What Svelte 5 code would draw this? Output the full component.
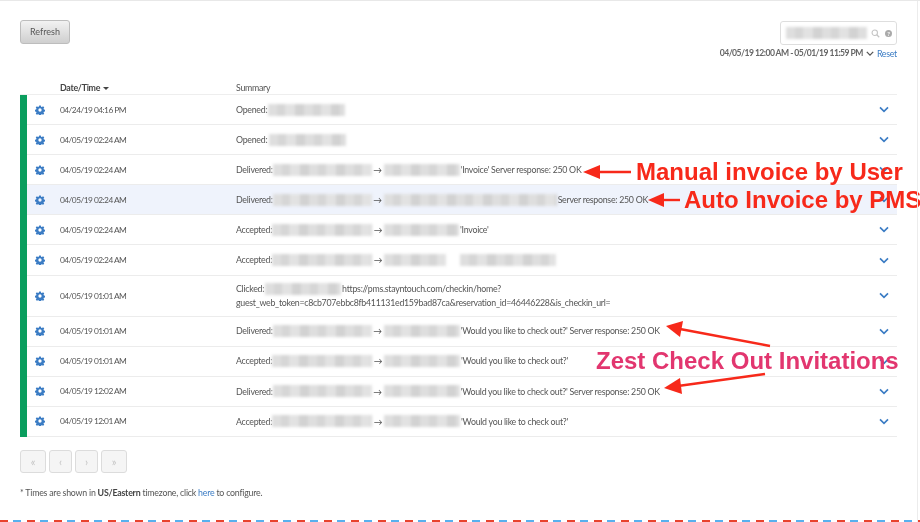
<script>
    const rows = [
        { date: '04/24/19 04:16 PM', label: 'Opened:', parts: [{ w: 77, gap: 1 }] },
        { date: '04/05/19 02:24 AM', label: 'Opened:', parts: [{ w: 77, gap: 2 }] },
        { date: '04/05/19 02:24 AM', label: 'Delivered:', parts: [{ w: 99, gap: 0 }, { w: 76, arrow: true }], text: "'Invoice' Server response: 250 OK" },
        { date: '04/05/19 02:24 AM', label: 'Delivered:', parts: [{ w: 99, gap: 0 }, { w: 173, arrow: true }], text: 'Server response: 250 OK', active: true },
        { date: '04/05/19 02:24 AM', label: 'Accepted:', parts: [{ w: 100, gap: 0 }, { w: 75, arrow: true }], text: "'Invoice'" },
        { date: '04/05/19 02:24 AM', label: 'Accepted:', parts: [{ w: 100, gap: 0 }, { w: 62, arrow: true }, { w: 96, gap: 14 }] },
        {
            date: '04/05/19 01:01 AM',
            label: 'Clicked:',
            parts: [{ w: 76, gap: 1 }],
            text: 'https://pms.stayntouch.com/checkin/home?',
            extra: 'guest_web_token=c8cb707ebbc8fb411131ed159bad87ca&reservation_id=46446228&is_checkin_url=',
            tall: true
        },
        { date: '04/05/19 01:01 AM', label: 'Delivered:', parts: [{ w: 99, gap: 0 }, { w: 76, arrow: true }], text: "'Would you like to check out?' Server response: 250 OK" },
        { date: '04/05/19 01:01 AM', label: 'Accepted:', parts: [{ w: 100, gap: 0 }, { w: 76, arrow: true }], text: "'Would you like to check out?'" },
        { date: '04/05/19 12:02 AM', label: 'Delivered:', parts: [{ w: 99, gap: 0 }, { w: 76, arrow: true }], text: "'Would you like to check out?' Server response: 250 OK" },
        { date: '04/05/19 12:01 AM', label: 'Accepted:', parts: [{ w: 100, gap: 0 }, { w: 76, arrow: true }], text: "'Would you like to check out?'" }
    ];

    const pager = ['«', '‹', '›', '»'];
</script>

<main>
    <div class="toolbar">
        <button class="refresh">Refresh</button>
        <div class="filters">
            <div class="search">
                <span class="blur search-blur"></span>
                <svg class="search-icon" viewBox="0 0 12 12" width="9" height="9">
                    <circle cx="5" cy="5" r="3.6" fill="none" stroke="#c4c4c4" stroke-width="1.4" />
                    <path d="M7.7 7.7 11 11" stroke="#c4c4c4" stroke-width="1.6" />
                </svg>
                <span class="help">?</span>
            </div>
            <div class="range">
                <b>04/05/19 12:00 AM - 05/01/19 11:59 PM</b>
                <svg viewBox="0 0 10 6" width="8" height="5">
                    <path d="M1 1 5 5 9 1" fill="none" stroke="#555" stroke-width="1.6" />
                </svg>
                <a href="#reset">Reset</a>
            </div>
        </div>
    </div>

    <div class="head">
        <span class="head-date">Date/Time <i class="caret"></i></span>
        <span>Summary</span>
    </div>

    <div class="table">
        {#each rows as row}
            <div class="row" class:tall={row.tall} class:active={row.active}>
                <span class="status"></span>
                <svg class="gear" viewBox="0 0 24 24" width="10" height="10">
                    <path
                        fill="#3b7cc4"
                        fill-rule="evenodd"
                        d="M10 1h4l.6 3 2.2.9 2.6-1.7 2.8 2.8-1.7 2.6.9 2.2 3 .6v4l-3 .6-.9 2.2 1.7 2.6-2.8 2.8-2.6-1.7-2.2.9-.6 3h-4l-.6-3-2.2-.9-2.6 1.7-2.8-2.8 1.7-2.6-.9-2.2-3-.6v-4l3-.6.9-2.2L1.8 5.800l2.800-2.800 2.600 1.700 2.200-.9zM12 8a4 4 0 1 0 0 8 4 4 0 0 0 0-8z"
                    />
                </svg>
                <span class="date">{row.date}</span>
                <div class="summary">
                    <div class="line">
                        <span>{row.label}</span>
                        {#each row.parts as part}
                            {#if part.arrow}<span class="arrow">→</span>{/if}
                            <span class="blur" style="width: {part.w}px; margin-left: {part.gap ?? 0}px"></span>
                        {/each}
                        {#if row.text}<span class="after">{row.text}</span>{/if}
                    </div>
                    {#if row.extra}<div class="line">{row.extra}</div>{/if}
                </div>
                <svg class="chevron" viewBox="0 0 12 8" width="10" height="7">
                    <path d="M1.200 1.500 6 6.200 10.800 1.500" fill="none" stroke="#3b7cc4" stroke-width="2" />
                </svg>
            </div>
        {/each}
    </div>

    <div class="pager">
        {#each pager as item}
            <button disabled>{item}</button>
        {/each}
    </div>

    <p class="note">
        * Times are shown in <b>US/Eastern</b> timezone, click <a href="#here">here</a> to configure.
    </p>

    <div class="airmail"></div>

    <svg class="marks" viewBox="0 0 920 522" width="920" height="522">
        <g stroke="#f7291a" stroke-width="2.400" fill="#f7291a">
            <path d="M631 172H596" />
            <path stroke="none" d="M583 172 600 165V179z" />
            <path d="M680 200H660" />
            <path stroke="none" d="M648 200 664 193V207z" />
            <path d="M770 346 680 329" />
            <path stroke="none" d="M666 326 683 321 680 337z" />
            <path d="M765 374 678 386" />
            <path stroke="none" d="M664 388 680 378 682 394z" />
        </g>
    </svg>
    <span class="note-red manual">Manual invoice by User</span>
    <span class="note-red auto">Auto Invoice by PMS</span>
    <span class="note-red zest">Zest Check Out Invitations</span>
</main>

<style>
    :global(body) {
        margin: 0;
        background: #fff;
    }

    main {
        position: relative;
        width: 920px;
        height: 522px;
        box-sizing: border-box;
        padding: 20px 23px 0 20px;
        overflow: hidden;
        border-top: 1px solid #e8e8e8;
        font-family: Lato, "Liberation Sans", sans-serif;
        font-size: 8.800px;
        letter-spacing: -0.270px;
        color: #555;
        filter: blur(0.3px);
    }

    main::after {
        content: '';
        position: absolute;
        top: 0;
        right: 2px;
        bottom: 0;
        width: 1px;
        background: #ececec;
    }

    .toolbar {
        display: flex;
        justify-content: space-between;
        align-items: flex-start;
        height: 58px;
    }

    .refresh {
        width: 50px;
        height: 24px;
        margin-top: -1px;
        padding: 0 0 2px;
        font: inherit;
        font-size: 9px;
        letter-spacing: 0;
        color: #555;
        background: linear-gradient(#f2f2f2, #cfcfcf);
        border: 1px solid #bdbdbd;
        border-radius: 3px;
    }

    .filters {
        display: flex;
        flex-direction: column;
        align-items: flex-end;
    }

    .search {
        display: flex;
        align-items: center;
        box-sizing: border-box;
        width: 117px;
        height: 24px;
        padding: 0 3px 0 5px;
        border: 1px solid #dedede;
        border-radius: 3px;
    }

    .search-blur {
        width: 81px;
        margin-right: 4px;
    }

    .help {
        display: flex;
        align-items: center;
        justify-content: center;
        flex: none;
        width: 7px;
        height: 7px;
        margin-left: 5px;
        font-size: 6px;
        font-weight: 700;
        color: #fff;
        background: #aaa;
        border-radius: 50%;
    }

    .range {
        display: flex;
        align-items: center;
        gap: 3px;
        margin-top: 2px;
        line-height: 13px;
    }

    .range b {
        font-size: 8.600px;
        letter-spacing: -0.540px;
        color: #666;
    }

    .range a {
        margin-top: -1px;
    }

    a {
        color: #3b7cc4;
        text-decoration: none;
    }

    .head {
        display: flex;
        height: 15px;
        align-items: center;
        padding: 1px 0 0 40px;
        box-sizing: border-box;
    }

    .head-date {
        width: 176px;
        font-weight: 700;
        color: #444;
    }

    .caret {
        display: inline-block;
        margin-left: 1px;
        vertical-align: 1px;
        border: 3px solid transparent;
        border-top: 3px solid #444;
        border-bottom: 0;
    }

    .table {
        border-top: 1px solid #eee;
    }

    .row {
        display: flex;
        align-items: center;
        height: 30.100px;
        box-sizing: border-box;
        border-bottom: 1px solid #ececec;
    }

    .row.tall {
        height: 41px;
    }

    .row.active {
        background: #eff3fc;
    }

    .status {
        align-self: stretch;
        width: 7px;
        margin-bottom: -1px;
        background: #0a9e5e;
    }

    .gear {
        margin: 0 15px 0 8px;
    }

    .date {
        width: 176px;
        font-size: 8.400px;
        letter-spacing: -0.550px;
    }

    .summary {
        flex: 1;
        line-height: 13.500px;
    }

    .line {
        display: flex;
        align-items: center;
        white-space: nowrap;
    }

    .blur {
        display: inline-block;
        height: 12px;
        flex: none;
        background: repeating-linear-gradient(90deg, #dedede 0 9px, #d6d6d6 9px 17px, #e2e2e2 17px 27px, #d2d2d2 27px 36px);
        filter: blur(1.5px);
    }

    .arrow {
        width: 12px;
        text-align: center;
        color: #555;
    }

    .after {
        margin-left: 1px;
    }

    .chevron {
        margin-right: 8px;
    }

    .pager {
        display: flex;
        gap: 3px;
        margin-top: 13px;
    }

    .pager button {
        width: 23px;
        height: 23px;
        padding: 0;
        font: inherit;
        font-size: 11px;
        color: #c4c4c4;
        background: #f5f5f5;
        border: 1px solid #dcdcdc;
        border-radius: 3px;
    }

    .pager button:first-child,
    .pager button:last-child {
        width: 26px;
    }

    .note {
        margin: 13px 0 0;
        line-height: 13px;
        letter-spacing: -0.220px;
    }

    .note b {
        color: #444;
    }

    .airmail {
        position: absolute;
        left: 0;
        right: 0;
        bottom: 0;
        height: 2px;
        background: repeating-linear-gradient(90deg, #e8432e 0 8px, transparent 8px 13px, #58b0ee 13px 21px, transparent 21px 27px);
    }

    .marks {
        position: absolute;
        top: -1px;
        left: 0;
    }

    .note-red {
        position: absolute;
        font-family: "Liberation Sans", Arial, sans-serif;
        font-weight: 700;
        font-size: 24px;
        line-height: 28px;
        letter-spacing: 0;
        white-space: nowrap;
        color: #f7291a;
    }

    .manual {
        top: 157px;
        left: 636px;
    }

    .auto {
        top: 185px;
        left: 684px;
    }

    .zest {
        top: 346px;
        left: 596px;
        color: #e2366f;
    }
</style>
